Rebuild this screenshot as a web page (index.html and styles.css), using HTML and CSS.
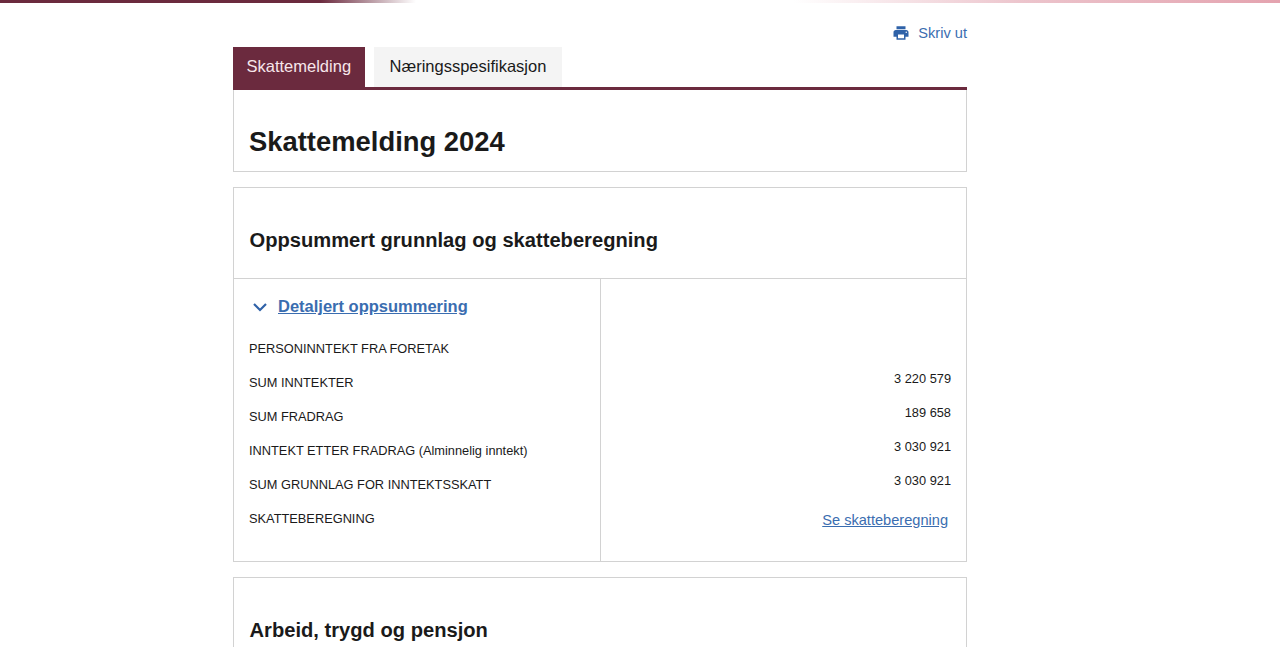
FILE: index.html
```html
<!DOCTYPE html>
<html lang="no">
<head>
  <meta charset="UTF-8">
  <meta name="viewport" content="width=device-width, initial-scale=1.0">
  <title>Skattemelding 2024</title>
  <link rel="stylesheet" href="styles.css">
</head>
<body>
  <div class="top-bar"></div>
  <div class="container">
    <div class="print-row">
      <a class="print-link" href="#">
        <svg class="print-icon" viewBox="0 0 24 24" aria-hidden="true">
          <path d="M19 8H5c-1.66 0-3 1.34-3 3v6h4v4h12v-4h4v-6c0-1.66-1.34-3-3-3zm-3 11H8v-5h8v5zm3-7c-.55 0-1-.45-1-1s.45-1 1-1 1 .45 1 1-.45 1-1 1zm-1-9H6v4h12V3z"/>
        </svg>
        Skriv ut
      </a>
    </div>

    <div class="tabs">
      <a class="tab tab-active" href="#">Skattemelding</a>
      <a class="tab" href="#">Næringsspesifikasjon</a>
    </div>

    <div class="card title-card">
      <h1>Skattemelding 2024</h1>
    </div>

    <div class="card">
      <h2 class="card-heading">Oppsummert grunnlag og skatteberegning</h2>
      <div class="summary">
        <div class="summary-left">
          <a class="toggle" href="#">
            <svg class="chevron" viewBox="0 0 16 10" aria-hidden="true">
              <path d="M2 2l6 6 6-6"/>
            </svg>
            <span>Detaljert oppsummering</span>
          </a>
          <div class="row">PERSONINNTEKT FRA FORETAK</div>
          <div class="row">SUM INNTEKTER</div>
          <div class="row">SUM FRADRAG</div>
          <div class="row">INNTEKT ETTER FRADRAG (Alminnelig inntekt)</div>
          <div class="row">SUM GRUNNLAG FOR INNTEKTSSKATT</div>
          <div class="row">SKATTEBEREGNING</div>
        </div>
        <div class="summary-right">
          <div class="row">3 220 579</div>
          <div class="row">189 658</div>
          <div class="row">3 030 921</div>
          <div class="row">3 030 921</div>
          <a class="calc-link" href="#">Se skatteberegning</a>
        </div>
      </div>
    </div>

    <div class="card">
      <h2 class="card-heading card-heading-last">Arbeid, trygd og pensjon</h2>
    </div>
  </div>
</body>
</html>
```

FILE: styles.css
```css
*, *::before, *::after {
  box-sizing: border-box;
}

:root {
  --wine: #6b2a3e;
  --link: #3a6db0;
  --border: #d2d2d2;
  --text: #1a1a1a;
}

html, body {
  height: 647px;
  overflow: hidden;
}

body {
  margin: 0;
  background: #fff;
  color: var(--text);
  font-family: "Liberation Sans", Arial, sans-serif;
}

.top-bar {
  height: 3px;
  background: linear-gradient(90deg, #6b2a3e 0%, #6b2a3e 25%, #fff 32.5%, #fff 62%, #ecc4cc 80%, #e4a3af 100%);
}

.container {
  width: 734px;
  margin-left: 233px;
}

.print-row {
  display: flex;
  justify-content: flex-end;
  height: 44px;
  padding-top: 21px;
}

.print-link {
  display: flex;
  align-items: center;
  gap: 8px;
  height: 18px;
  font-size: 14.6px;
  color: var(--link);
  text-decoration: none;
}

.print-icon {
  width: 18px;
  height: 18px;
  fill: #2f62a8;
}

.tabs {
  display: flex;
  gap: 9px;
  height: 43px;
  border-bottom: 3px solid var(--wine);
}

.tab {
  display: flex;
  align-items: center;
  height: 40px;
  padding: 0 16px 2px;
  font-size: 16.5px;
  color: var(--text);
  text-decoration: none;
  background: #f4f4f4;
}

.tab-active {
  padding: 0 13.5px 2px;
  background: var(--wine);
  color: #f7e6ea;
}

.card {
  border: 1px solid var(--border);
  margin-bottom: 15px;
}

.title-card {
  height: 82px;
  border-top: none;
  padding: 36px 15px 0;
}

h1 {
  margin: 0;
  font-size: 27.4px;
  line-height: 32px;
  font-weight: 700;
}

.card-heading {
  margin: 0;
  height: 91px;
  padding: 40px 15.5px 0;
  font-size: 20.15px;
  line-height: 24px;
  font-weight: 700;
  border-bottom: 1px solid var(--border);
}

.card-heading-last {
  border-bottom: none;
}

.summary {
  display: grid;
  grid-template-columns: 367px 1fr;
  height: 282px;
}

.summary-left {
  padding: 16px 15px 0;
  border-right: 1px solid var(--border);
}

.toggle {
  display: flex;
  align-items: center;
  gap: 10px;
  height: 23px;
  margin-bottom: 14px;
  padding-left: 3px;
  font-size: 16.5px;
  font-weight: 700;
  color: var(--link);
}

.chevron {
  width: 16px;
  height: 10px;
  fill: none;
  stroke: #2f62a8;
  stroke-width: 2.2;
}

.row {
  height: 34px;
  font-size: 12.8px;
  line-height: 34px;
}

.summary-right {
  padding: 83px 15px 0;
  text-align: right;
}

.calc-link {
  display: block;
  margin-top: 5px;
  padding-right: 3px;
  font-size: 14.6px;
  line-height: 34px;
  color: var(--link);
}
```
